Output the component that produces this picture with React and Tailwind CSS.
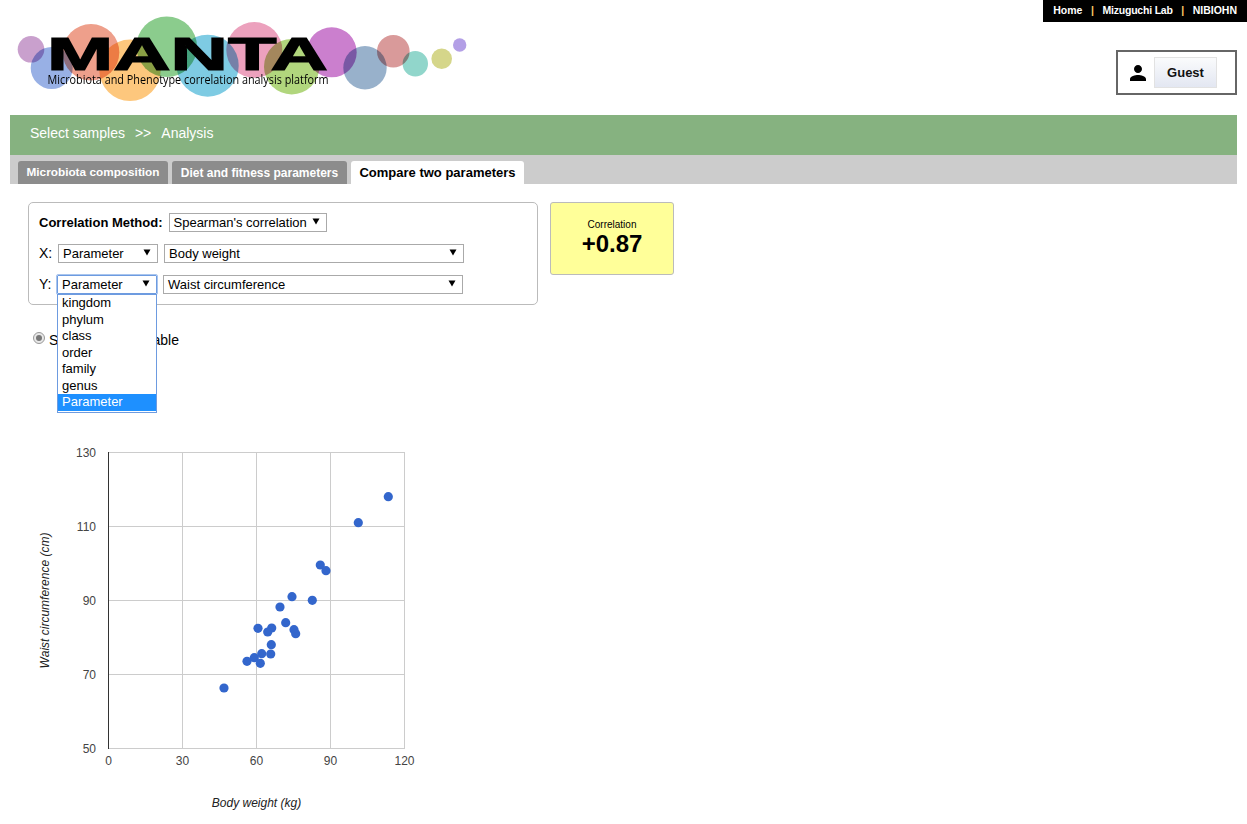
const CIRCLES = [
  [31, 49.3, 13.3, '#c9a0cd'],
  [51.7, 68, 21, '#98b0e5'],
  [91, 52.3, 28.3, '#ee9f8b'],
  [130, 70.3, 30.7, '#fdc77d'],
  [166.7, 46.7, 30.3, '#8bcc8d'],
  [207.7, 65.7, 31, '#7ecbe3'],
  [254.3, 50, 28, '#eca1bd'],
  [291.7, 66.7, 27.7, '#b1d67d'],
  [331.7, 52.3, 25, '#cb7fce'],
  [365, 67.7, 21.7, '#98b1cb'],
  [393.3, 51.3, 16.3, '#d99a9a'],
  [415.3, 63.7, 12.7, '#91d6cb'],
  [441.7, 58.7, 10.3, '#d5d68a'],
  [459.7, 45, 6.7, '#b39fe6'],
]

const POINTS = [
  [388.3, 496.7], [358.3, 522.7], [320.3, 565], [326, 570.7], [292, 596.7],
  [312.3, 600.3], [280, 607], [285.7, 622.7], [258, 628.3], [271.7, 628],
  [267.7, 632], [294, 629.7], [295.7, 633.7], [271.3, 644.7], [270.7, 654],
  [261.7, 653.7], [254.3, 657.7], [247, 661.3], [260.3, 663.3], [224, 688],
]

const X_TICKS = [[108, '0'], [182, '30'], [256, '60'], [330, '90'], [404, '120']]
const Y_TICKS = [[452, '130'], [526, '110'], [600, '90'], [674, '70'], [748, '50']]
const TAXA = ['kingdom', 'phylum', 'class', 'order', 'family', 'genus']

function Logo() {
  return (
    <svg width="470" height="115" viewBox="0 0 470 115" className="block -ml-[10px] isolate">
      {CIRCLES.map(([cx, cy, r, fill], i) => (
        <circle key={i} cx={cx} cy={cy} r={r} fill={fill} className="mix-blend-multiply" />
      ))}
      <text x="47" y="70" fontFamily="Liberation Sans" fontWeight="700" fontSize="46" stroke="#000" strokeWidth="1.2" textLength="281" lengthAdjust="spacingAndGlyphs">
        MANTA
      </text>
      <text x="47.5" y="84" fontFamily="Open Sans" fontSize="12" fill="#000" textLength="281" lengthAdjust="spacingAndGlyphs">
        Microbiota and Phenotype correlation analysis platform
      </text>
    </svg>
  )
}

function Select({ label, width, focused }) {
  return (
    <div className={`flex items-center justify-between shrink-0 h-[19px] pl-1 pr-[6px] bg-white text-[13px] leading-none whitespace-nowrap text-black border ${width} ${focused ? 'border-[#6d9be0] outline outline-1 outline-[#a9c5ee] rounded-[1px]' : 'border-[#aaaaaa]'}`}>
      <span>{label}</span>
      <svg width="8" height="7" viewBox="0 0 8 7" className="block -mt-0.5">
        <path d="M0.5 0.5h7L4 6.5z" fill="#000" />
      </svg>
    </div>
  )
}

function Chart() {
  return (
    <svg width="400" height="384" viewBox="28 440 400 384" className="block ml-[28px] mt-[93px]">
      {X_TICKS.slice(1).map(([x]) => (
        <line key={x} x1={x + 0.5} x2={x + 0.5} y1="452" y2="749" stroke="#cccccc" />
      ))}
      {Y_TICKS.map(([y]) => (
        <line key={y} x1="108" x2="405" y1={y + 0.5} y2={y + 0.5} stroke="#cccccc" />
      ))}
      <line x1="108.5" x2="108.5" y1="452" y2="749" stroke="#333333" />
      {X_TICKS.map(([x, t]) => (
        <text key={t} x={x + 0.5} y="765" textAnchor="middle" fontSize="12" fontFamily="Liberation Sans" fill="#444444">{t}</text>
      ))}
      {Y_TICKS.map(([y, t]) => (
        <text key={t} x="96" y={y + 5} textAnchor="end" fontSize="12" fontFamily="Liberation Sans" fill="#444444">{t}</text>
      ))}
      <text x="256.5" y="807" textAnchor="middle" fontSize="12" fontStyle="italic" fontFamily="Liberation Sans" fill="#222222">Body weight (kg)</text>
      <text transform="translate(49 600.5) rotate(-90)" textAnchor="middle" fontSize="12" fontStyle="italic" fontFamily="Liberation Sans" fill="#222222">Waist circumference (cm)</text>
      {POINTS.map(([cx, cy], i) => (
        <circle key={i} cx={cx} cy={cy} r="4.6" fill="#3366cc" />
      ))}
    </svg>
  )
}

export default function App() {
  return (
    <div className="w-[1247px] h-[824px] overflow-hidden bg-white font-['Liberation_Sans',Arial,sans-serif] text-[14px] text-black">
      {/* Header */}
      <header className="flex justify-between items-start h-[115px] px-[10px]">
        <Logo />
        <div className="flex flex-col items-end">
          <div className="flex items-center h-[22px] bg-black text-white font-bold text-[10.5px] pl-[10px] pr-[10px] -mr-[10px]">
            <span>Home</span>
            <span className="text-[#ffcc66] mx-[8.5px]">|</span>
            <span className="tracking-[-0.2px]">Mizuguchi Lab</span>
            <span className="text-[#ffcc66] mx-[8.5px]">|</span>
            <span>NIBIOHN</span>
          </div>
          <div className="flex items-center mt-[28px] w-[121px] h-[45px] border-2 border-[#666666] pl-[8px]">
            <svg width="24" height="24" viewBox="0 0 24 24" className="block">
              <path d="M12 12c2.21 0 4-1.79 4-4s-1.79-4-4-4-4 1.79-4 4 1.79 4 4 4zm0 2c-2.67 0-8 1.34-8 4v2h16v-2c0-2.66-5.33-4-8-4z" fill="#000" />
            </svg>
            <div className="ml-[4px] flex items-center justify-center w-[63px] h-[31px] border border-[#e2e2e2] bg-gradient-to-b from-[#fafbfc] to-[#e3e7f2] font-bold text-[13px] text-[#111]">
              Guest
            </div>
          </div>
        </div>
      </header>

      {/* Breadcrumb */}
      <div className="mx-[10px] flex items-center h-[40px] bg-[#86b280] pl-[20px] pb-[3px] text-white">
        <span>Select samples</span>
        <span className="ml-[10px] mr-[10px]">&gt;&gt;</span>
        <span>Analysis</span>
      </div>

      {/* Tabs */}
      <div className="mx-[10px] flex items-end gap-[4px] h-[29px] bg-[#cccccc] pl-[8px] font-bold">
        <div className="flex items-center justify-center w-[150px] h-[23px] rounded-t-[3px] bg-[#8c8c8c] text-white text-[11.8px]">Microbiota composition</div>
        <div className="flex items-center justify-center w-[175px] h-[23px] rounded-t-[3px] bg-[#8c8c8c] text-white text-[12px]">Diet and fitness parameters</div>
        <div className="flex items-center justify-center w-[173px] h-[23px] rounded-t-[3px] bg-white text-black text-[13px]">Compare two parameters</div>
      </div>

      {/* Controls */}
      <div className="flex items-start gap-[12px] ml-[28px] mt-[18px]">
        <div className="w-[510px] h-[103px] border border-[#bbbbbb] rounded-[5px] pt-[10px] pl-[10px] flex flex-col gap-[12px]">
          <div className="flex items-center gap-[6px] h-[19px]">
            <span className="font-bold text-[13px]">Correlation Method:</span>
            <Select label="Spearman's correlation" width="w-[158px]" />
          </div>
          <div className="flex items-center h-[19px]">
            <span className="w-[19px]">X:</span>
            <Select label="Parameter" width="w-[100px]" />
            <div className="w-[6px]" />
            <Select label="Body weight" width="w-[300px]" />
          </div>
          <div className="flex items-center h-[19px]">
            <span className="w-[18px]">Y:</span>
            <div className="relative">
              <Select label="Parameter" width="w-[100px]" focused />
              <div className="absolute left-0 top-[19px] z-10 w-[100px] h-[119px] border border-[#6d9be0] bg-white pb-[1px] text-[13px] leading-[16.5px]">
                {TAXA.map((t) => (
                  <div key={t} className="pl-[4px] h-[16.5px]">{t}</div>
                ))}
                <div className="pl-[4px] h-[16.5px] bg-[#1e90ff] text-white">Parameter</div>
              </div>
            </div>
            <div className="w-[6px]" />
            <Select label="Waist circumference" width="w-[300px]" />
          </div>
        </div>
        <div className="flex flex-col items-center w-[124px] h-[73px] border border-[#bbbbbb] rounded-[3px] bg-[#ffff99] pt-[16px]">
          <span className="text-[10px] leading-[12px]">Correlation</span>
          <span className="font-bold text-[24px] leading-[26px]">+0.87</span>
        </div>
      </div>

      {/* Radio */}
      <div className="flex items-center gap-[4px] ml-[33px] mt-[26px] h-[16px]">
        <div className="flex items-center justify-center w-[12px] h-[12px] -mt-[2px] rounded-full border border-[#999999] bg-[#e8e8e8]">
          <div className="w-[6px] h-[6px] rounded-full bg-[#777777]" />
        </div>
        <span className="pt-[2px]">Show a sample table</span>
      </div>

      <Chart />
    </div>
  )
}
